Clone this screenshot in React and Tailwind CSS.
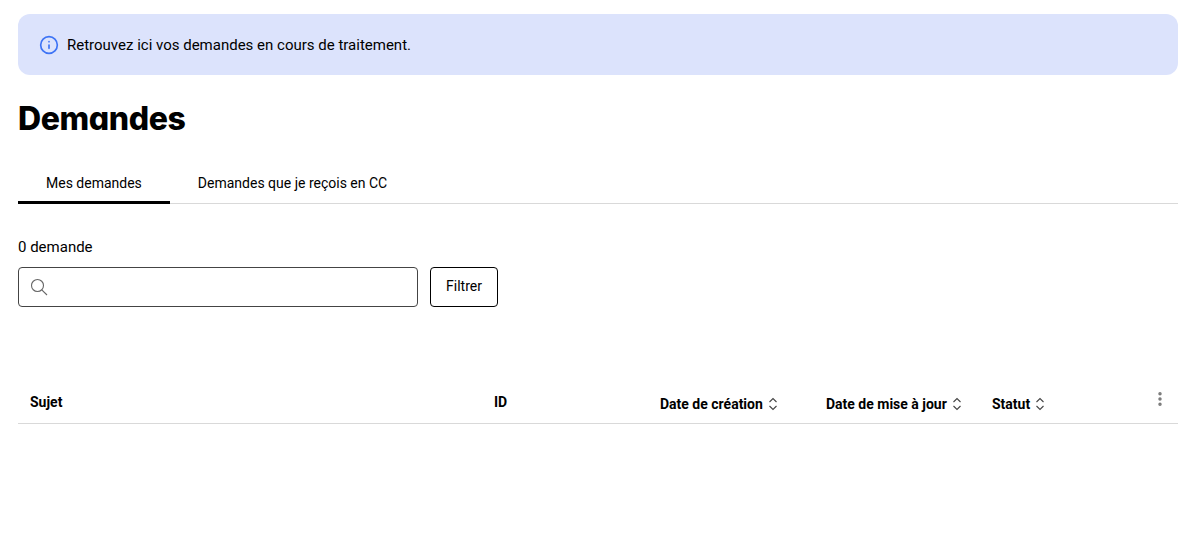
import { Info, EllipsisVertical } from "lucide-react";

function SortHead({ label }) {
  return (
    <div className="flex items-center gap-1 pl-3 pt-1 text-sm font-bold">
      <span>{label}</span>
      <svg width="12" height="14" viewBox="0 0 12 14" fill="none" stroke="#444" strokeWidth="1.1">
        <path d="M2.5 5 L6 1.5 L9.5 5" />
        <path d="M2.5 9 L6 12.5 L9.5 9" />
      </svg>
    </div>
  );
}

export default function App() {
  return (
    <div className="min-h-[538px] bg-white pl-[18px] pr-[9px] pt-[14px] font-['Roboto',sans-serif] text-black">
      {/* bandeau info */}
      <div className="flex h-[61px] items-center gap-2 rounded-xl bg-[#dce3fc] pl-[21px]">
        <Info size={20} strokeWidth={2} className="text-[#3d73f5]" />
        <span className="pt-px text-[15px]">Retrouvez ici vos demandes en cours de traitement.</span>
      </div>

      <h1 className="mt-[26px] text-[32px] leading-[36px] font-extrabold tracking-[-0.4px] font-['Inter',sans-serif] [font-feature-settings:'cv11']">Demandes</h1>

      {/* onglets */}
      <div className="mt-[29px] flex border-b border-[#d9d9d9]">
        <div className="-mb-px h-[38px] border-b-[3px] border-black px-7 pt-[7px] text-sm">Mes demandes</div>
        <div className="h-[37px] px-7 pt-[7px] text-sm">Demandes que je reçois en CC</div>
      </div>

      <p className="mt-[33px] text-[15px] leading-5">0 demande</p>

      <div className="mt-[10px] flex gap-3">
        <div className="flex h-10 w-[400px] items-center rounded border border-[#444] pl-[11px]">
          <svg width="18" height="18" viewBox="0 0 18 18" fill="none" stroke="#666" strokeWidth="1.1">
            <circle cx="7.5" cy="7.5" r="6" />
            <path d="M11.8 11.8 L17 17" />
          </svg>
        </div>
        <button className="h-10 w-[68px] rounded border border-black pb-0.5 text-sm">Filtrer</button>
      </div>

      {/* en-tete tableau */}
      <div className="mt-[77px] grid h-10 grid-cols-[464px_166px_166px_166px_1fr] items-center border-b border-[#d9d9d9] pb-1">
        <div className="pl-3 text-sm font-bold">Sujet</div>
        <div className="pl-3 text-sm font-bold">ID</div>
        <SortHead label="Date de création" />
        <SortHead label="Date de mise à jour" />
        <div className="flex items-center justify-between">
          <SortHead label="Statut" />
          <EllipsisVertical size={18} strokeWidth={2.6} className="mr-[9px] -mt-[5px] text-[#777]" />
        </div>
      </div>
    </div>
  );
}
